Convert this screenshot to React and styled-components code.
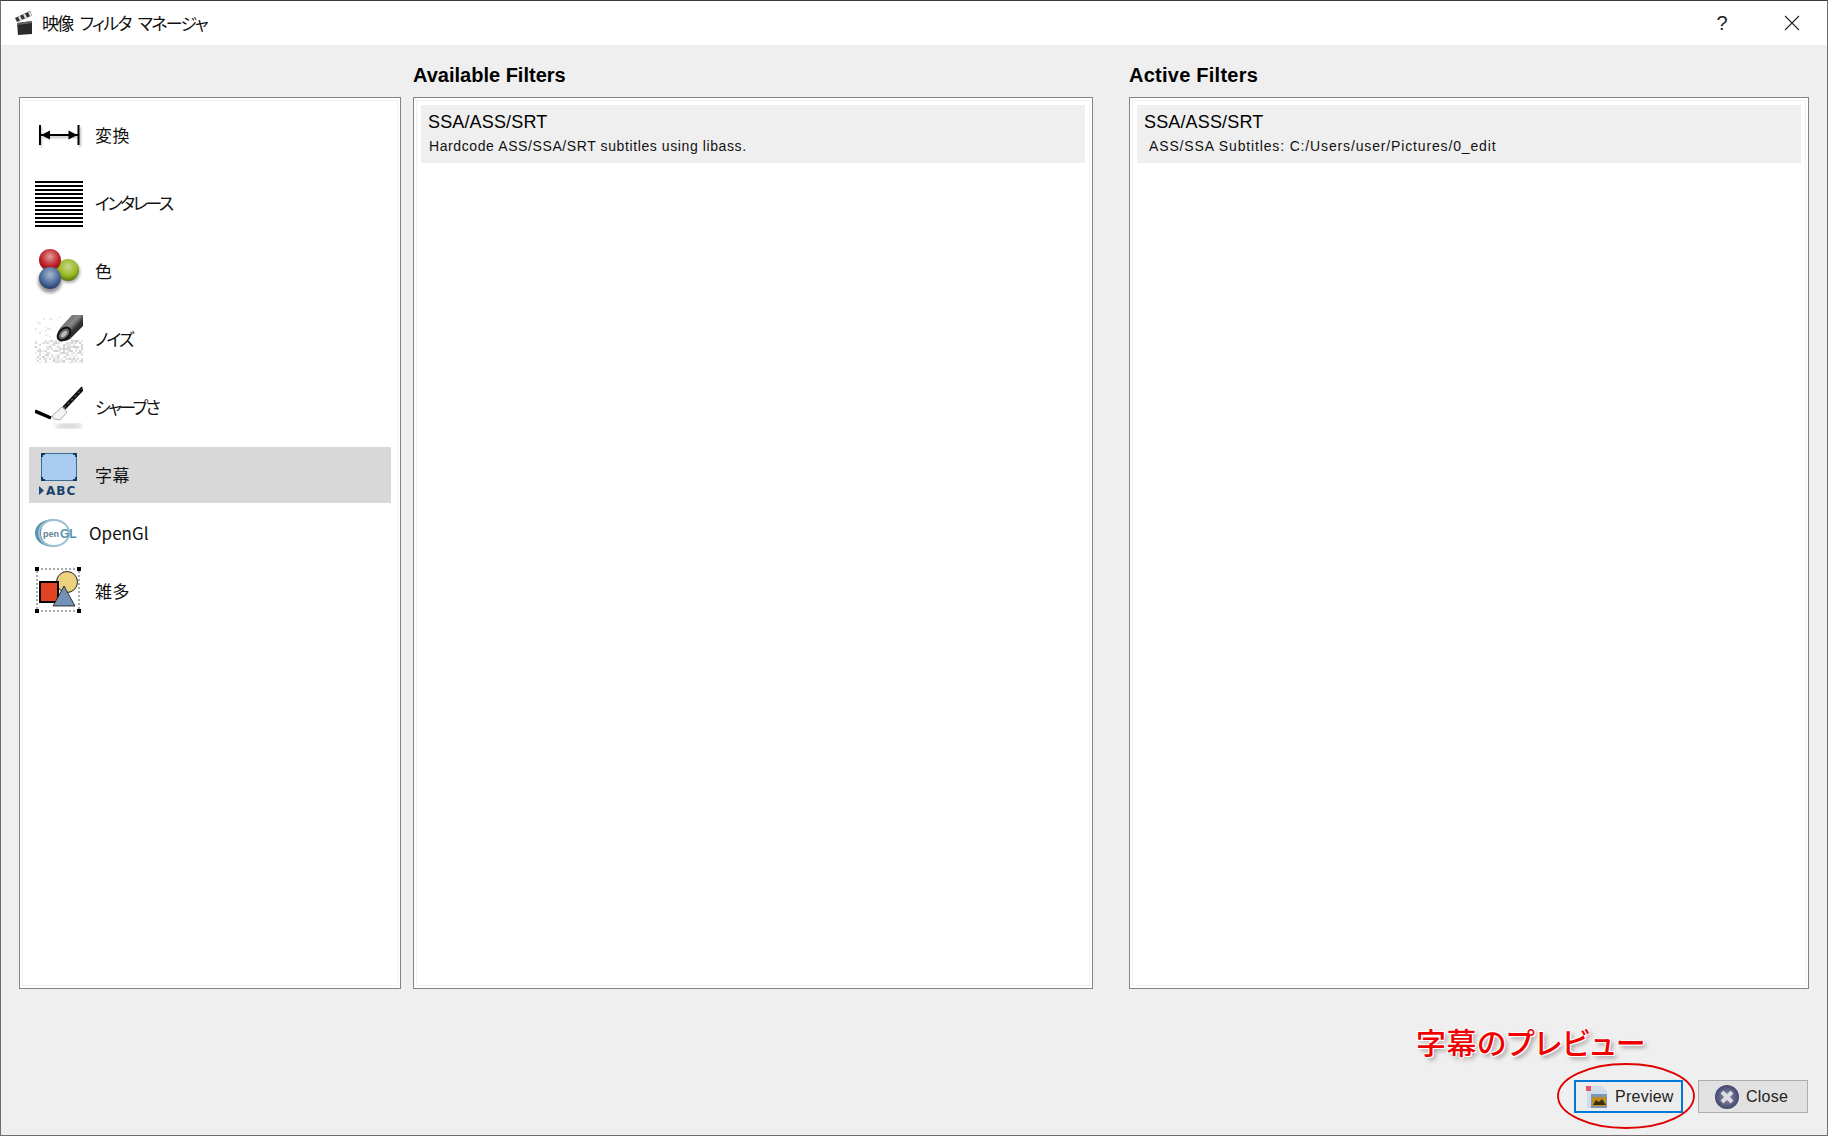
import React from 'react';
import styled, { createGlobalStyle } from 'styled-components';

const GlobalStyle = createGlobalStyle`
    html, body {
        margin: 0;
        padding: 0;
        background: #efefef;
    }
    * {
        box-sizing: border-box;
    }
`;

const UI_FONT = `"Noto Sans CJK JP", "Noto Sans", sans-serif`;

const Window = styled.div`
    position: relative;
    display: flex;
    flex-direction: column;
    width: 1828px;
    height: 1136px;
    overflow: hidden;
    background: #efefef;
    border: 1px solid #6f6f6f;
    border-top-color: #3c3c3c;
    color: #000;
    font-family: ${UI_FONT};
`;

const TitleBar = styled.div`
    display: flex;
    align-items: center;
    height: 44px;
    padding-left: 14px;
    background: #fff;
    flex: none;
`;

const TitleText = styled.div`
    margin-left: 9px;
    font-size: 17px;
    line-height: 24px;
    font-feature-settings: "palt";
    letter-spacing: -1.7px;
    word-spacing: 5px;
    color: #111;
`;

const TitleButtons = styled.div`
    display: flex;
    align-items: center;
    margin-left: auto;
`;

const HelpButton = styled.div`
    width: 70px;
    text-align: center;
    font-family: "Liberation Sans", sans-serif;
    font-size: 20px;
    color: #222;
`;

const CloseButton = styled.div`
    display: flex;
    justify-content: center;
    width: 70px;
`;

const Columns = styled.div`
    display: flex;
    padding: 0 18px;
    flex: none;
`;

const Column = styled.div`
    display: flex;
    flex-direction: column;
    width: ${(p) => p.$width}px;
    margin-right: ${(p) => p.$gap || 0}px;
`;

const Heading = styled.div`
    height: 52px;
    padding-top: 16px;
    font-family: "Liberation Sans", sans-serif;
    font-size: 20px;
    line-height: 28px;
    font-weight: 700;
    letter-spacing: ${(p) => p.$spacing || 0}px;
    color: #000;
`;

const Panel = styled.div`
    display: flex;
    flex-direction: column;
    gap: ${(p) => p.$gap || 0}px;
    height: 892px;
    padding: ${(p) => p.$pad}px;
    background: #fff;
    border: 1px solid #82838c;
    box-shadow: inset 0 0 0 2px #fff, inset 0 0 0 3px #f0f0f0;
`;

const CategoryRow = styled.div`
    display: flex;
    align-items: center;
    height: ${(p) => p.$height || 56}px;
    flex: none;
    padding-left: 6px;
    background: ${(p) => (p.$selected ? '#d8d8d8' : 'transparent')};
`;

const CategoryIcon = styled.div`
    display: flex;
    align-items: center;
    width: ${(p) => p.$width || 48}px;
    height: 48px;
    flex: none;
`;

const CategoryLabel = styled.div`
    margin-left: ${(p) => p.$gap || 12}px;
    font-size: 17px;
    line-height: 24px;
    font-feature-settings: "palt";
    letter-spacing: ${(p) => p.$spacing || 0}px;
    color: #111;
`;

const FilterRow = styled.div`
    height: 58px;
    flex: none;
    padding: 4px 7px 0;
    background: #efefef;
`;

const FilterName = styled.div`
    font-family: "Liberation Sans", sans-serif;
    font-size: 18px;
    line-height: 26px;
    letter-spacing: 0.15px;
    color: #000;
`;

const FilterDescription = styled.div`
    margin-top: 1px;
    margin-left: ${(p) => p.$indent || 1}px;
    font-family: "Liberation Sans", sans-serif;
    font-size: 14px;
    line-height: 20px;
    letter-spacing: ${(p) => p.$spacing || 0.6}px;
    color: #111;
`;

const Footer = styled.div`
    display: flex;
    justify-content: flex-end;
    gap: 15px;
    margin-top: 91px;
    padding-right: 19px;
`;

const PreviewWrap = styled.div`
    position: relative;
`;

const ActionButton = styled.div`
    display: flex;
    align-items: center;
    width: ${(p) => p.$width}px;
    height: 33px;
    padding-left: ${(p) => p.$pad}px;
    gap: ${(p) => p.$gap}px;
    background: ${(p) => (p.$focused ? '#ececec' : '#e1e1e1')};
    border: ${(p) => (p.$focused ? '2px solid #0078d7' : '1px solid #adadad')};
    font-family: "Liberation Sans", sans-serif;
    font-size: 16px;
    line-height: 26px;
    letter-spacing: 0.25px;
    padding-top: 1px;
    color: #222;
`;

const Annotation = styled.div`
    position: absolute;
    left: -158px;
    top: -59px;
    white-space: nowrap;
    font-size: 30px;
    line-height: 40px;
    font-weight: 500;
    font-feature-settings: "palt";
    letter-spacing: 0.6px;
    color: #f00000;
    text-shadow: -1px -1px 0 #fff, 1px -1px 0 #fff, -1px 1px 0 #fff, 1px 1px 0 #fff, 3px 3px 4px rgba(0, 0, 0, 0.35);
`;

const Ellipse = styled.svg`
    position: absolute;
    left: -17px;
    top: -17px;
    overflow: visible;
    pointer-events: none;
`;

const ClapperIcon = () => (
    <svg width="18" height="24" viewBox="0 0 18 24">
        <path d="M2 12 17 10v13L3 24z" fill="#2b2b2b" />
        <path d="M2 12 17 10v2L2 14z" fill="#666" />
        <path d="M0 7 15 0l2 4.500L2 11z" fill="#333" />
        <path d="m3 5.700 2 4 2-.9-2-4zM8 3.500l2 4 2-.9-2-4zM13 1.300l2 4 2-.9-2-4z" fill="#ddd" />
    </svg>
);

const CloseIcon = () => (
    <svg width="16" height="16" viewBox="0 0 16 16">
        <path d="M1 1l14 14M15 1 1 15" stroke="#222" strokeWidth="1.100" fill="none" />
    </svg>
);

const ConvertIcon = () => (
    <svg width="48" height="48" viewBox="0 0 48 48">
        <defs>
            <filter id="convertShadow"><feGaussianBlur stdDeviation="1" /></filter>
        </defs>
        <path d="M6 16v20M45 16v20M8 26h36" stroke="#bbb" strokeWidth="2" fill="none" filter="url(#convertShadow)" />
        <path d="M5 14v20M43.500 14v20" stroke="#000" strokeWidth="2" fill="none" />
        <path d="M5 24h38" stroke="#000" strokeWidth="2" fill="none" />
        <path d="m6 24 9-4.500v9zM42.500 24l-9-4.500v9z" fill="#000" />
    </svg>
);

const InterlaceIcon = () => (
    <svg width="48" height="48" viewBox="0 0 48 48">
        {Array.from({ length: 12 }, (_, i) => (
            <rect key={i} x="0" y={2 + i * 4} width="48" height="2" fill="#000" />
        ))}
    </svg>
);

const Ball = ({ id, cx, cy, light, mid, dark }) => (
    <>
        <defs>
            <radialGradient id={id} cx="0.5" cy="0.35" r="0.7">
                <stop offset="0" stopColor={light} />
                <stop offset="0.6" stopColor={mid} />
                <stop offset="1" stopColor={dark} />
            </radialGradient>
        </defs>
        <circle cx={cx} cy={cy} r="11" fill={`url(#${id})`} />
    </>
);

const ColorIcon = () => (
    <svg width="48" height="48" viewBox="0 0 48 48">
        <defs>
            <filter id="ballShadow"><feGaussianBlur stdDeviation="1.500" /></filter>
        </defs>
        <circle cx="15" cy="34" r="12" fill="#999" filter="url(#ballShadow)" />
        <circle cx="34" cy="25" r="11" fill="#aaa" filter="url(#ballShadow)" />
        <Ball id="ballGreen" cx={33} cy={23} light="#c8d890" mid="#98b820" dark="#4a6410" />
        <Ball id="ballRed" cx={15} cy={13} light="#e0a0a0" mid="#c02028" dark="#701018" />
        <Ball id="ballBlue" cx={15} cy={31} light="#a8b8d0" mid="#4a6a9c" dark="#1c3058" />
    </svg>
);

// dither pattern for the noise icon, seeded so that it comes out the same every time
const noiseDots = (() => {
    const dots = [];
    let seed = 17;
    const next = () => {
        seed = (seed * 1103 + 12345) % 65536;
        return seed / 65536;
    };
    for (let y = 1; y < 48; y += 2) {
        for (let x = 0; x < 48; x += 2) {
            const density = y > 24 ? 0.6 : 0.25 * (1 - x / 40);
            if (next() < density) {
                const shade = y > 24 ? 205 + Math.floor(next() * 40) : 230 + Math.floor(next() * 20);
                dots.push({ x, y, fill: `rgb(${shade},${shade},${shade})` });
            }
        }
    }
    return dots;
})();

const NoiseIcon = () => (
    <svg width="48" height="48" viewBox="0 0 48 48">
        {noiseDots.map((d) => (
            <rect key={`${d.x}-${d.y}`} x={d.x} y={d.y} width="2" height="2" fill={d.fill} />
        ))}
        <defs>
            <linearGradient id="tube" x1="0" y1="0" x2="1" y2="1">
                <stop offset="0" stopColor="#555" />
                <stop offset="0.45" stopColor="#888" />
                <stop offset="0.6" stopColor="#333" />
                <stop offset="1" stopColor="#111" />
            </linearGradient>
        </defs>
        <path d="M37 0h11v11L35 24q-6 4-10 0-4-5 0-11z" fill="url(#tube)" />
        <ellipse cx="29" cy="19" rx="5" ry="7.500" transform="rotate(45 29 19)" fill="#666" stroke="#111" strokeWidth="2" />
        <ellipse cx="29" cy="19" rx="2" ry="4" transform="rotate(45 29 19)" fill="#bbb" />
    </svg>
);

const SharpenIcon = () => (
    <svg width="48" height="48" viewBox="0 0 48 48">
        <defs>
            <filter id="brushShadow"><feGaussianBlur stdDeviation="2" /></filter>
        </defs>
        <ellipse cx="34" cy="43" rx="14" ry="2.500" fill="#ccc" filter="url(#brushShadow)" />
        <path d="M48 5 29 25" stroke="#111" strokeWidth="4" fill="none" />
        <path d="M48 5 29 25" stroke="#999" strokeWidth="1" strokeDasharray="2 3" fill="none" />
        <path d="M27 24l5 5-7 8-6-1-2-3z" fill="#f4f4f4" stroke="#aaa" strokeWidth="1" />
        <path d="M0 28l16 7" stroke="#000" strokeWidth="3.500" fill="none" />
    </svg>
);

const SubtitleIcon = () => (
    <svg width="48" height="48" viewBox="0 0 48 48">
        <rect x="6.500" y="2.500" width="35" height="27" fill="#a9cdf0" stroke="#3a6a98" strokeWidth="1" />
        <path d="M6 2h4v2H8v2H6zM38 2h4v4h-2V4h-2zM6 30h4v-2H8v-2H6zM38 30h4v-4h-2v2h-2z" fill="#12385c" />
        <path d="m4 35 5 4.500L4 44z" fill="#1c4a78" />
        <text x="11" y="44" fontFamily="DejaVu Sans, sans-serif" fontSize="12" fontWeight="700" letterSpacing="1" fill="#16416b">ABC</text>
    </svg>
);

const OpenGlIcon = () => (
    <svg width="42" height="48" viewBox="0 0 42 48">
        <path d="M24 11C12 8 0 14 0 24s12 16 24 13c-10 1-18-4-18-13S14 10 24 11z" fill="#5a93b0" />
        <ellipse cx="19" cy="24" rx="15" ry="13" fill="none" stroke="#9cc0d2" strokeWidth="2" />
        <text x="8" y="28" fontFamily="Liberation Sans, sans-serif" fontSize="9" fontWeight="700" fill="#5f7f92">pen</text>
        <text x="25" y="29" fontFamily="Liberation Sans, sans-serif" fontSize="12" fontWeight="700" fill="#5a93b0">GL</text>
    </svg>
);

const MiscIcon = () => (
    <svg width="48" height="48" viewBox="0 0 48 48">
        <rect x="2" y="2" width="42" height="42" fill="none" stroke="#555" strokeWidth="1" strokeDasharray="2 2" />
        <path d="M0 0h4v4H0zM42 0h4v4h-4zM0 42h4v4H0zM42 42h4v4h-4z" fill="#000" />
        <circle cx="32" cy="15" r="10.500" fill="#ecd27e" stroke="#222" strokeWidth="1" />
        <rect x="5" y="15" width="18" height="20" fill="#e04222" stroke="#000" strokeWidth="2" />
        <path d="m29 19 11 20H18z" fill="#7391b4" stroke="#111" strokeWidth="0.800" />
    </svg>
);

const PreviewIcon = () => (
    <svg width="23" height="24" viewBox="0 0 23 24">
        <path d="M2 1h15l5 5v17H2z" fill="#cfdcea" />
        <path d="M6 9h16v14H6z" fill="#7d97b8" />
        <rect x="7" y="12" width="14" height="9" fill="#c08c1c" />
        <path d="M8 20l3-5 3 2 3-3 4 6z" fill="#3c3010" />
        <rect x="1" y="1" width="5" height="5" fill="#f05060" />
    </svg>
);

const CloseCircleIcon = () => (
    <svg width="24" height="24" viewBox="0 0 24 24">
        <defs>
            <radialGradient id="closeDisc" cx="0.5" cy="0.5" r="0.55">
                <stop offset="0" stopColor="#8f93ad" />
                <stop offset="1" stopColor="#3b4069" />
            </radialGradient>
        </defs>
        <circle cx="12" cy="12" r="12" fill="url(#closeDisc)" />
        <path d="M7 7l10 10M17 7 7 17" stroke="#dcdce2" strokeWidth="4" fill="none" />
    </svg>
);

const categories = [
    { label: '変換', icon: <ConvertIcon />, spacing: 0.5 },
    { label: 'インタレース', icon: <InterlaceIcon />, spacing: -2.4 },
    { label: '色', icon: <ColorIcon /> },
    { label: 'ノイズ', icon: <NoiseIcon />, spacing: -2 },
    { label: 'シャープさ', icon: <SharpenIcon />, spacing: -2.6 },
    { label: '字幕', icon: <SubtitleIcon />, selected: true, spacing: 0.5 },
    { label: 'OpenGl', icon: <OpenGlIcon />, iconWidth: 42, gap: 12, height: 36 },
    { label: '雑多', icon: <MiscIcon />, spacing: 0.5 },
];

export default function App() {
    return (
        <>
            <GlobalStyle />
            <Window>
                <TitleBar>
                    <ClapperIcon />
                    <TitleText>映像 フィルタ マネージャ</TitleText>
                    <TitleButtons>
                        <HelpButton>?</HelpButton>
                        <CloseButton><CloseIcon /></CloseButton>
                    </TitleButtons>
                </TitleBar>
                <Columns>
                    <Column $width={382} $gap={12}>
                        <Heading />
                        <Panel $pad={9} $gap={12}>
                            {categories.map((c) => (
                                <CategoryRow key={c.label} $selected={c.selected} $height={c.height}>
                                    <CategoryIcon $width={c.iconWidth}>{c.icon}</CategoryIcon>
                                    <CategoryLabel $gap={c.gap} $spacing={c.spacing}>{c.label}</CategoryLabel>
                                </CategoryRow>
                            ))}
                        </Panel>
                    </Column>
                    <Column $width={680} $gap={36}>
                        <Heading>Available Filters</Heading>
                        <Panel $pad={7}>
                            <FilterRow>
                                <FilterName>SSA/ASS/SRT</FilterName>
                                <FilterDescription>Hardcode ASS/SSA/SRT subtitles using libass.</FilterDescription>
                            </FilterRow>
                        </Panel>
                    </Column>
                    <Column $width={680}>
                        <Heading $spacing={0.25}>Active Filters</Heading>
                        <Panel $pad={7}>
                            <FilterRow>
                                <FilterName>SSA/ASS/SRT</FilterName>
                                <FilterDescription $indent={5} $spacing={0.85}>ASS/SSA Subtitles: C:/Users/user/Pictures/0_edit</FilterDescription>
                            </FilterRow>
                        </Panel>
                    </Column>
                </Columns>
                <Footer>
                    <PreviewWrap>
                        <ActionButton $focused $width={109} $pad={9} $gap={7}>
                            <PreviewIcon />
                            Preview
                        </ActionButton>
                        <Annotation>字幕のプレビュー</Annotation>
                        <Ellipse width="138" height="66" viewBox="0 0 138 66">
                            <ellipse cx="69" cy="33" rx="68" ry="32" fill="none" stroke="#e00000" strokeWidth="1.800" />
                        </Ellipse>
                    </PreviewWrap>
                    <ActionButton $width={110} $pad={16} $gap={7}>
                        <CloseCircleIcon />
                        Close
                    </ActionButton>
                </Footer>
            </Window>
        </>
    );
}
